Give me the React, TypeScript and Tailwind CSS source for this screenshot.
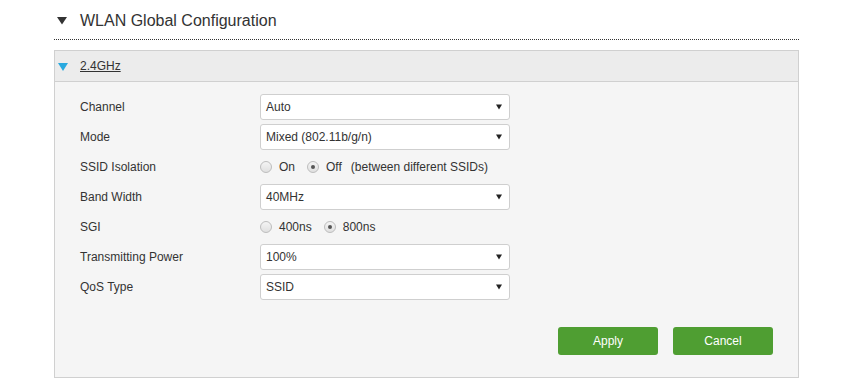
// WLAN Global Configuration - 2.4GHz settings panel

type Row =
  | { label: string; kind: 'select'; value: string }
  | { label: string; kind: 'radio'; options: string[]; checked: number; note?: string };

const rows: Row[] = [
  { label: 'Channel', kind: 'select', value: 'Auto' },
  { label: 'Mode', kind: 'select', value: 'Mixed (802.11b/g/n)' },
  { label: 'SSID Isolation', kind: 'radio', options: ['On', 'Off'], checked: 1, note: '(between different SSIDs)' },
  { label: 'Band Width', kind: 'select', value: '40MHz' },
  { label: 'SGI', kind: 'radio', options: ['400ns', '800ns'], checked: 1 },
  { label: 'Transmitting Power', kind: 'select', value: '100%' },
  { label: 'QoS Type', kind: 'select', value: 'SSID' },
];

function Radio({ checked }: { checked: boolean }) {
  return (
    <span className="flex h-[12px] w-[12px] items-center justify-center rounded-full border border-[#bdbdbd] bg-gradient-to-b from-[#f4f4f4] to-[#e0e0e0]">
      {checked && <span className="h-[4px] w-[4px] rounded-full bg-[#555]" />}
    </span>
  );
}

function Select({ value }: { value: string }) {
  return (
    <div className="flex h-[26px] w-[250px] items-center justify-between rounded-[3px] border border-[#cfcfcf] bg-white pl-[5px] pr-[7px]">
      <span>{value}</span>
      <svg width="6" height="6" viewBox="0 0 6 6">
        <polygon points="0,0.5 6,0.5 3,5.5" fill="#222" />
      </svg>
    </div>
  );
}

export default function App() {
  return (
    <div className="h-[378px] w-[857px] overflow-hidden bg-white pl-[54px] font-['Liberation_Sans',Arial,sans-serif] text-[12px] text-[#333]">
      <div className="w-[745px]">
        <div className="flex h-[40px] items-center border-b border-dotted border-[#333] pt-[3px]">
          <svg width="10" height="8" viewBox="0 0 10 8" className="ml-[3px]">
            <polygon points="0,0 10,0 5,7.5" fill="#333" />
          </svg>
          <span className="ml-[13px] text-[16px] text-[#333]">WLAN Global Configuration</span>
        </div>

        <div className="mt-[10px] border border-[#d0d0d0]">
          <div className="flex h-[31px] items-center border-b border-[#d0d0d0] bg-[#ececec]">
            <svg width="10" height="8" viewBox="0 0 10 8" className="ml-[3px] mt-[1px]">
              <polygon points="0,0 10,0 5,8" fill="#29a9df" />
            </svg>
            <span className="ml-[12px] underline">2.4GHz</span>
          </div>

          <div className="h-[295px] bg-[#f5f5f5] pl-[25px] pt-[12px]">
            <div className="flex flex-col gap-[4px]">
              {rows.map((row) => (
                <div key={row.label} className="flex h-[26px] items-center">
                  <span className="w-[180px]">{row.label}</span>
                  {row.kind === 'select' ? (
                    <Select value={row.value} />
                  ) : (
                    <div className="flex items-center">
                      {row.options.map((opt, i) => (
                        <label key={opt} className="mr-[12px] flex items-center">
                          <Radio checked={i === row.checked} />
                          <span className="ml-[7px]">{opt}</span>
                        </label>
                      ))}
                      {row.note && <span className="-ml-[3px]">{row.note}</span>}
                    </div>
                  )}
                </div>
              ))}
            </div>

            <div className="mt-[27px] flex justify-end gap-[15px] pr-[25px]">
              <button className="h-[28px] w-[100px] rounded-[3px] bg-[#4f9e32] text-[12px] text-white">Apply</button>
              <button className="h-[28px] w-[100px] rounded-[3px] bg-[#4f9e32] text-[12px] text-white">Cancel</button>
            </div>
          </div>
        </div>
      </div>
    </div>
  );
}
